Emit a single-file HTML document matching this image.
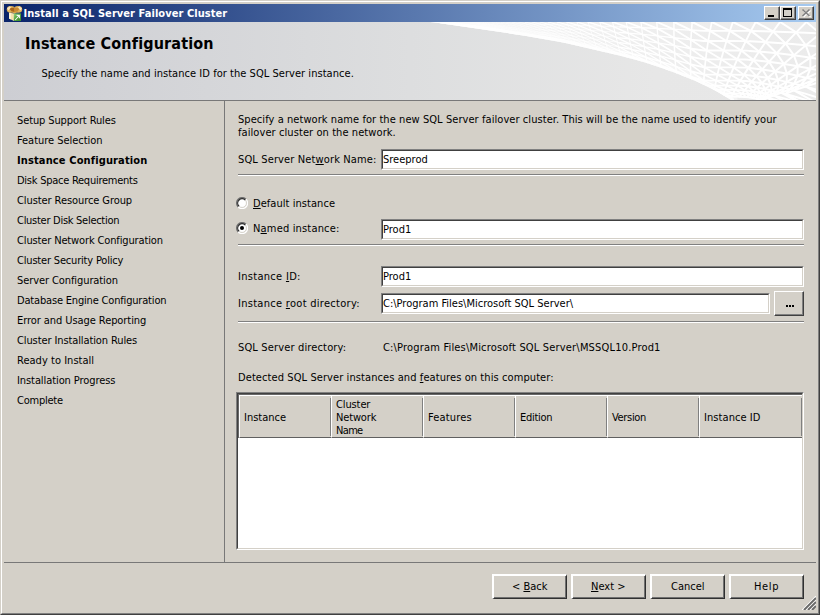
<!DOCTYPE html>
<html><head><meta charset="utf-8"><title>Install a SQL Server Failover Cluster</title>
<style>
html,body{margin:0;padding:0;}
body{width:820px;height:615px;overflow:hidden;background:#d4d0c8;position:relative;font-family:"DejaVu Sans Condensed","Liberation Sans",sans-serif;font-size:11px;color:#000;}
#c,#c div,#c i,#c span,#c svg{position:absolute;box-sizing:border-box;white-space:nowrap;}
#c{left:0;top:0;width:820px;height:615px;}
#win{left:0;top:0;width:820px;height:615px;border-top:1px solid #d4d0c8;border-left:1px solid #d4d0c8;border-right:1px solid #404040;border-bottom:1px solid #404040;}
#win2{left:1px;top:1px;width:818px;height:613px;border-top:1px solid #fff;border-left:1px solid #fff;border-right:1px solid #808080;border-bottom:1px solid #808080;}
#title{left:4px;top:4px;width:812px;height:18px;background:linear-gradient(to right,#0a246a 0%,#a6caf0 100%);}
.tb{top:6px;width:16px;height:14px;background:#d4d0c8;border-top:1px solid #fff;border-left:1px solid #fff;border-right:1px solid #404040;border-bottom:1px solid #404040;}
.tb i{left:0;top:0;width:14px;height:12px;border-right:1px solid #808080;border-bottom:1px solid #808080;}
#hdr{left:4px;top:22px;width:812px;height:78px;background:linear-gradient(to right,#cdced3 0%,#dddedf 50%,#e7e7e7 80%,#e8e8e8 100%);overflow:hidden;}
#hline{left:4px;top:100px;width:812px;height:1px;background:#787878;}
#vline{left:224px;top:101px;width:1px;height:461px;background:#787878;}
#bline{left:4px;top:562px;width:812px;height:1px;background:#787878;}
.t{line-height:13px;height:13px;font-size:11px;}
.b{font-weight:bold;}
.tt{font-weight:bold;color:#fff;}
.h1{font-weight:bold;font-size:16px;line-height:20px;height:20px;}
#c u{text-decoration:underline;}
.inp{background:#fff;height:21px;border-top:1px solid #808080;border-left:1px solid #808080;border-right:1px solid #fff;border-bottom:1px solid #fff;}
.inp i{left:0;top:0;right:0;bottom:0;border-top:1px solid #404040;border-left:1px solid #404040;border-right:1px solid #d4d0c8;border-bottom:1px solid #d4d0c8;}
.sep{left:238px;width:566px;height:2px;border-top:1px solid #808080;border-bottom:1px solid #fff;}
.btn{top:574px;width:75px;height:25px;background:#d4d0c8;border-top:2px solid #fff;border-left:2px solid #fff;border-right:1px solid #303030;border-bottom:1px solid #303030;}
.btn i{left:0;top:0;right:0;bottom:0;border-right:1px solid #707070;border-bottom:1px solid #707070;}
.btn2{left:774px;top:291px;width:30px;height:25px;background:#d4d0c8;border-top:1px solid #fff;border-left:1px solid #fff;border-right:1px solid #404040;border-bottom:1px solid #404040;}
.btn2 i{left:0;top:0;right:0;bottom:0;border-right:1px solid #808080;border-bottom:1px solid #808080;}
.dot{width:2px;height:2px;background:#000;top:305px;}
.radio{left:236px;width:12px;height:12px;}
#list{left:236px;top:392px;width:568px;height:158px;background:#fff;border-top:1px solid #808080;border-left:1px solid #808080;border-right:1px solid #fff;border-bottom:1px solid #fff;}
#list>i{left:0;top:0;right:0;bottom:0;border-top:1px solid #404040;border-left:1px solid #404040;border-right:1px solid #d4d0c8;border-bottom:1px solid #d4d0c8;}
#hd{left:238px;top:394px;width:564px;height:44px;background:#686868;}
.th{top:395px;height:43px;width:93px;background:#d4d0c8;border-top:1px solid #fff;border-left:1px solid #fff;border-bottom:1px solid #606060;}
.th i{right:0;top:2px;bottom:1px;width:1px;background:#808080;}
</style></head><body>
<div id="c">
 <div id="win"></div><div id="win2"></div>
 <div id="title">
<svg style="left:2px;top:1px" width="17" height="17" viewBox="0 0 17 17"><defs><linearGradient id="ig" x1="0" y1="0" x2="1" y2="1"><stop offset="0" stop-color="#9ad786"/><stop offset="0.5" stop-color="#4fa23c"/><stop offset="1" stop-color="#3c8a2c"/></linearGradient></defs><path d="M3,7.5 L8,8.5 L8,16 L3,13.5 Z" fill="#f3e2ae"/><path d="M3,7.5 L5,8 L5,14.5 L3,13.5 Z" fill="#fbf2d0"/><ellipse cx="4.9" cy="4.4" rx="4.1" ry="3.3" fill="#e0b35c"/><ellipse cx="12.1" cy="4.4" rx="4.1" ry="3.3" fill="#e0b35c"/><path d="M4,6 L8.5,4.2 L13,6 L8.5,8.8 Z" fill="#d9a548"/><path d="M3,3.2 L8.5,2.6 L8.5,7 L5.5,6.2 Z" fill="#a9651b"/><path d="M8.5,2.6 L14,3.2 L11.5,6.2 L8.5,7 Z" fill="#c98a32"/><path d="M1,3.5 L3.5,1.3 L5,2.5 L2.5,5.5 Z M16,3.5 L13.5,1.3 L12,2.5 L14.5,5.5 Z" fill="#f7e6bc"/><rect x="7.8" y="8.4" width="7.2" height="7.6" fill="url(#ig)"/><path d="M9.2,15 L12.8,11 M10.6,10.4 L13.4,10.4 L13.4,13.2" stroke="#fff" stroke-width="1.1" fill="none" stroke-opacity="0.95"/></svg>

 </div>
 <div class="tb" style="left:764px"><i></i><div style="left:3px;top:8px;width:6px;height:2px;background:#000"></div></div>
 <div class="tb" style="left:780px"><i></i><div style="left:2px;top:1px;width:9px;height:9px;border:1px solid #000;border-top-width:2px"></div></div>
 <div class="tb" style="left:798px"><i></i><svg style="left:2px;top:1px" width="11" height="10" viewBox="0 0 11 10"><path d="M2.5,2.5 L9.5,9 M9.5,2.5 L2.5,9" stroke="#fff" stroke-width="1.5" fill="none"/><path d="M1.5,1.5 L8.5,8 M8.5,1.5 L1.5,8" stroke="#808080" stroke-width="1.5" fill="none"/></svg></div>
 <div id="hdr">
<svg id="swoosh" width="812" height="78" viewBox="0 0 812 78" style="left:0;top:0"><defs><clipPath id="sw"><path d="M426.0,0.0 L426.0,0.0 L434.6,1.1 L443.2,2.3 L451.8,3.5 L460.4,4.7 L469.0,5.9 L477.6,7.2 L486.2,8.5 L494.8,9.8 L503.4,11.1 L512.0,12.5 L520.6,13.8 L529.2,15.2 L537.8,16.7 L546.4,18.2 L555.0,19.8 L563.6,21.5 L572.2,23.4 L580.8,25.4 L589.4,27.4 L598.0,29.5 L606.6,31.5 L615.2,33.5 L623.8,35.7 L632.4,38.0 L641.0,40.5 L649.6,43.3 L658.2,46.2 L666.8,49.3 L675.4,52.5 L684.0,55.9 L692.6,59.5 L701.2,63.4 L709.8,67.8 L718.4,72.7 L727.0,78.0 L812.0,78.0 L812.0,0.0 Z"/></clipPath><linearGradient id="swg" x1="0" y1="0" x2="1" y2="0"><stop offset="0" stop-color="#f8f8f8"/><stop offset="0.5" stop-color="#efefef"/><stop offset="1" stop-color="#ebebeb"/></linearGradient></defs>
<path d="M426.0,0.0 L426.0,0.0 L434.6,1.1 L443.2,2.3 L451.8,3.5 L460.4,4.7 L469.0,5.9 L477.6,7.2 L486.2,8.5 L494.8,9.8 L503.4,11.1 L512.0,12.5 L520.6,13.8 L529.2,15.2 L537.8,16.7 L546.4,18.2 L555.0,19.8 L563.6,21.5 L572.2,23.4 L580.8,25.4 L589.4,27.4 L598.0,29.5 L606.6,31.5 L615.2,33.5 L623.8,35.7 L632.4,38.0 L641.0,40.5 L649.6,43.3 L658.2,46.2 L666.8,49.3 L675.4,52.5 L684.0,55.9 L692.6,59.5 L701.2,63.4 L709.8,67.8 L718.4,72.7 L727.0,78.0 L812.0,78.0 L812.0,0.0 Z" fill="url(#swg)"/>
<g clip-path="url(#sw)" fill="none" stroke="#fff" stroke-linecap="round" stroke-linejoin="round">
<path stroke-width="0.35" d="M436.0,0.2 L450.0,0.5 L464.0,0.8 L478.0,1.0 L492.0,1.4 L506.0,1.7 L520.0,2.0 L534.0,2.3 L536.0,2.4"/>
<path stroke-width="0.68" d="M536.0,2.4 L550.0,2.7 L564.0,3.1 L578.0,3.6 L592.0,4.0 L606.0,4.5 L616.0,4.9"/>
<path stroke-width="1.30" d="M616.0,4.9 L630.0,5.4 L644.0,6.0 L658.0,6.7 L672.0,7.4 L686.0,8.2"/>
<path stroke-width="1.84" d="M686.0,8.2 L700.0,8.8 L714.0,8.8 L728.0,8.8 L742.0,8.9 L746.0,8.9"/>
<path stroke-width="2.00" d="M746.0,8.9 L760.0,9.2 L774.0,9.7 L788.0,10.2 L802.0,10.8 L816.0,11.5"/>
<path stroke-width="0.35" d="M436.0,0.4 L450.0,1.0 L464.0,1.6 L478.0,2.3 L492.0,2.9 L506.0,3.6 L520.0,4.3 L534.0,5.0 L536.0,5.1"/>
<path stroke-width="0.68" d="M536.0,5.1 L550.0,5.9 L564.0,6.7 L578.0,7.7 L592.0,8.7 L606.0,9.8 L616.0,10.5"/>
<path stroke-width="1.30" d="M616.0,10.5 L630.0,11.6 L644.0,12.9 L658.0,14.4 L672.0,16.0 L686.0,17.7"/>
<path stroke-width="1.84" d="M686.0,17.7 L700.0,19.0 L714.0,19.0 L728.0,19.0 L742.0,19.1 L746.0,19.3"/>
<path stroke-width="2.00" d="M746.0,19.3 L760.0,19.9 L774.0,20.9 L788.0,22.0 L802.0,23.3 L816.0,24.7"/>
<path stroke-width="0.35" d="M436.0,0.6 L450.0,1.5 L464.0,2.4 L478.0,3.4 L492.0,4.4 L506.0,5.4 L520.0,6.4 L534.0,7.5 L536.0,7.6"/>
<path stroke-width="0.68" d="M536.0,7.6 L550.0,8.8 L564.0,10.1 L578.0,11.6 L592.0,13.1 L606.0,14.6 L616.0,15.8"/>
<path stroke-width="1.30" d="M616.0,15.8 L630.0,17.4 L644.0,19.4 L658.0,21.6 L672.0,23.9 L686.0,26.5"/>
<path stroke-width="1.84" d="M686.0,26.5 L700.0,28.5 L714.0,28.5 L728.0,28.5 L742.0,28.7 L746.0,28.9"/>
<path stroke-width="2.00" d="M746.0,28.9 L760.0,29.9 L774.0,31.3 L788.0,33.0 L802.0,35.0 L816.0,37.1"/>
<path stroke-width="0.35" d="M436.0,0.8 L450.0,2.0 L464.0,3.2 L478.0,4.4 L492.0,5.7 L506.0,7.1 L520.0,8.4 L534.0,9.8 L536.0,10.0"/>
<path stroke-width="0.68" d="M536.0,10.0 L550.0,11.5 L564.0,13.2 L578.0,15.1 L592.0,17.2 L606.0,19.2 L616.0,20.6"/>
<path stroke-width="1.30" d="M616.0,20.6 L630.0,22.8 L644.0,25.3 L658.0,28.2 L672.0,31.3 L686.0,34.7"/>
<path stroke-width="1.84" d="M686.0,34.7 L700.0,37.3 L714.0,37.3 L728.0,37.3 L742.0,37.5 L746.0,37.8"/>
<path stroke-width="2.00" d="M746.0,37.8 L760.0,39.2 L774.0,41.0 L788.0,43.2 L802.0,45.8 L816.0,48.6"/>
<path stroke-width="0.35" d="M436.0,1.0 L450.0,2.4 L464.0,3.9 L478.0,5.4 L492.0,7.0 L506.0,8.6 L520.0,10.2 L534.0,11.9 L536.0,12.2"/>
<path stroke-width="0.68" d="M536.0,12.2 L550.0,14.0 L564.0,16.1 L578.0,18.4 L592.0,20.9 L606.0,23.3 L616.0,25.1"/>
<path stroke-width="1.30" d="M616.0,25.1 L630.0,27.8 L644.0,30.8 L658.0,34.3 L672.0,38.1 L686.0,42.2"/>
<path stroke-width="1.84" d="M686.0,42.2 L700.0,45.4 L714.0,45.4 L728.0,45.4 L742.0,45.7 L746.0,46.0"/>
<path stroke-width="2.00" d="M746.0,46.0 L760.0,47.7 L774.0,49.9 L788.0,52.6 L802.0,55.7 L816.0,59.1"/>
<path stroke-width="0.35" d="M436.0,1.1 L450.0,2.8 L464.0,4.5 L478.0,6.3 L492.0,8.1 L506.0,10.0 L520.0,11.9 L534.0,13.9 L536.0,14.1"/>
<path stroke-width="0.68" d="M536.0,14.1 L550.0,16.3 L564.0,18.7 L578.0,21.4 L592.0,24.2 L606.0,27.1 L616.0,29.1"/>
<path stroke-width="1.30" d="M616.0,29.1 L630.0,32.2 L644.0,35.8 L658.0,39.9 L672.0,44.3 L686.0,49.0"/>
<path stroke-width="1.84" d="M686.0,49.0 L700.0,52.7 L714.0,52.7 L728.0,52.7 L742.0,53.0 L746.0,53.4"/>
<path stroke-width="2.00" d="M746.0,53.4 L760.0,55.3 L774.0,57.9 L788.0,61.1 L802.0,64.6 L816.0,68.6"/>
<path stroke-width="0.35" d="M436.0,1.3 L450.0,3.1 L464.0,5.0 L478.0,7.0 L492.0,9.0 L506.0,11.1 L520.0,13.2 L534.0,15.4 L536.0,15.7"/>
<path stroke-width="0.68" d="M536.0,15.7 L550.0,18.1 L564.0,20.8 L578.0,23.8 L592.0,26.9 L606.0,30.1 L616.0,32.4"/>
<path stroke-width="1.30" d="M616.0,32.4 L630.0,35.9 L644.0,39.8 L658.0,44.3 L672.0,49.2 L686.0,54.5"/>
<path stroke-width="1.84" d="M686.0,54.5 L700.0,58.6 L714.0,58.6 L728.0,58.6 L742.0,59.0 L746.0,59.4"/>
<path stroke-width="2.00" d="M746.0,59.4 L760.0,61.5 L774.0,64.4 L788.0,67.9 L802.0,71.9 L816.0,76.3"/>
<path stroke-width="0.35" d="M436.0,1.4 L450.0,3.4 L464.0,5.4 L478.0,7.6 L492.0,9.8 L506.0,12.0 L520.0,14.3 L534.0,16.7 L536.0,17.1"/>
<path stroke-width="0.68" d="M536.0,17.1 L550.0,19.7 L564.0,22.5 L578.0,25.8 L592.0,29.2 L606.0,32.7 L616.0,35.2"/>
<path stroke-width="1.30" d="M616.0,35.2 L630.0,38.9 L644.0,43.2 L658.0,48.1 L672.0,53.4 L686.0,59.1"/>
<path stroke-width="1.84" d="M686.0,59.1 L700.0,63.6 L714.0,63.6 L728.0,63.6 L742.0,64.0 L746.0,64.4"/>
<path stroke-width="2.00" d="M746.0,64.4 L760.0,66.8 L774.0,69.9 L788.0,73.7 L802.0,78.0 L816.0,82.8"/>
<path stroke-width="0.35" d="M436.0,1.5 L450.0,3.6 L464.0,5.8 L478.0,8.1 L492.0,10.4 L506.0,12.8 L520.0,15.3 L534.0,17.8 L536.0,18.2"/>
<path stroke-width="0.68" d="M536.0,18.2 L550.0,21.0 L564.0,24.1 L578.0,27.5 L592.0,31.2 L606.0,34.9 L616.0,37.5"/>
<path stroke-width="1.30" d="M616.0,37.5 L630.0,41.5 L644.0,46.1 L658.0,51.3 L672.0,57.0 L686.0,63.1"/>
<path stroke-width="1.84" d="M686.0,63.1 L700.0,67.8 L714.0,67.8 L728.0,67.8 L742.0,68.3 L746.0,68.8"/>
<path stroke-width="2.00" d="M746.0,68.8 L760.0,71.2 L774.0,74.6 L788.0,78.6 L802.0,83.2"/>
<path stroke-width="0.35" d="M436.0,1.5 L450.0,3.8 L464.0,6.1 L478.0,8.5 L492.0,11.0 L506.0,13.5 L520.0,16.1 L534.0,18.8 L536.0,19.2"/>
<path stroke-width="0.68" d="M536.0,19.2 L550.0,22.1 L564.0,25.3 L578.0,29.0 L592.0,32.9 L606.0,36.7 L616.0,39.5"/>
<path stroke-width="1.30" d="M616.0,39.5 L630.0,43.7 L644.0,48.5 L658.0,54.1 L672.0,60.0 L686.0,66.4"/>
<path stroke-width="1.84" d="M686.0,66.4 L700.0,71.5 L714.0,71.5 L728.0,71.5 L742.0,71.9 L746.0,72.4"/>
<path stroke-width="2.00" d="M746.0,72.4 L760.0,75.0 L774.0,78.5 L788.0,82.8"/>
<path stroke-width="0.35" d="M436.0,1.6 L450.0,4.0 L464.0,6.4 L478.0,8.9 L492.0,11.5 L506.0,14.1 L520.0,16.8 L534.0,19.6 L536.0,20.0"/>
<path stroke-width="0.68" d="M536.0,20.0 L550.0,23.0 L564.0,26.4 L578.0,30.2 L592.0,34.3 L606.0,38.3 L616.0,41.2"/>
<path stroke-width="1.30" d="M616.0,41.2 L630.0,45.6 L644.0,50.6 L658.0,56.4 L672.0,62.6 L686.0,69.3"/>
<path stroke-width="1.84" d="M686.0,69.3 L700.0,74.5 L714.0,74.5 L728.0,74.5 L742.0,75.0 L746.0,75.5"/>
<path stroke-width="2.00" d="M746.0,75.5 L760.0,78.2 L774.0,81.9"/>
<path stroke-width="6" stroke-opacity="0.85" d="M426.0,0.0 L434.6,1.1 L443.2,2.3 L451.8,3.5 L460.4,4.7 L469.0,5.9 L477.6,7.2 L486.2,8.5 L494.8,9.8 L503.4,11.1 L512.0,12.5 L520.6,13.8 L529.2,15.2 L537.8,16.7 L546.4,18.2 L555.0,19.8 L563.6,21.5 L572.2,23.4 L580.8,25.4 L589.4,27.4 L598.0,29.5 L606.6,31.5 L615.2,33.5 L623.8,35.7 L632.4,38.0 L641.0,40.5 L649.6,43.3 L658.2,46.2 L666.8,49.3 L675.4,52.5 L684.0,55.9 L692.6,59.5 L701.2,63.4 L709.8,67.8 L718.4,72.7 L727.0,78.0"/>
<path stroke-width="13" stroke-opacity="0.4" d="M426.0,0.0 L434.6,1.1 L443.2,2.3 L451.8,3.5 L460.4,4.7 L469.0,5.9 L477.6,7.2 L486.2,8.5 L494.8,9.8 L503.4,11.1 L512.0,12.5 L520.6,13.8 L529.2,15.2 L537.8,16.7 L546.4,18.2 L555.0,19.8 L563.6,21.5 L572.2,23.4 L580.8,25.4 L589.4,27.4 L598.0,29.5 L606.6,31.5 L615.2,33.5 L623.8,35.7 L632.4,38.0 L641.0,40.5 L649.6,43.3 L658.2,46.2 L666.8,49.3 L675.4,52.5 L684.0,55.9 L692.6,59.5 L701.2,63.4 L709.8,67.8 L718.4,72.7 L727.0,78.0"/>
<path stroke-width="2.00" d="M1006.8,0.0 L942.5,19.8 L894.2,35.0 L861.3,45.4 L836.7,53.2 L817.3,59.5 L801.7,64.5 L789.9,68.4 L781.6,71.9 L1006.8,195.6"/>
<path stroke-width="2.00" d="M966.3,0.0 L917.2,17.9 L877.6,32.5 L849.4,43.1 L827.9,51.2 L810.6,57.8 L796.5,63.2 L785.8,67.3 L777.0,70.7 L769.8,73.5 L763.7,75.9 L758.4,77.9"/>
<path stroke-width="2.00" d="M928.6,0.0 L891.6,16.0 L859.8,30.1 L836.3,40.6 L817.8,49.0 L802.7,55.9 L790.2,61.6 L780.7,66.0 L772.9,69.6 L766.4,72.7 L760.9,75.2 L756.3,77.4"/>
<path stroke-width="2.00" d="M893.5,0.0 L866.1,14.3 L841.1,27.7 L821.9,38.1 L806.4,46.6 L793.5,53.8 L782.7,59.8 L774.4,64.5 L767.6,68.4 L761.9,71.6 L757.1,74.4 L753.0,76.7"/>
<path stroke-width="2.00" d="M860.9,0.0 L840.9,12.8 L821.7,25.4 L806.3,35.6 L793.7,44.2 L782.9,51.6 L773.9,57.9 L766.8,62.8 L761.0,67.0 L756.1,70.4 L752.0,73.4 L748.5,75.9"/>
<path stroke-width="2.00" d="M830.6,0.0 L816.2,11.5 L801.8,23.3 L789.9,33.3 L779.8,41.9 L771.1,49.4 L763.7,56.0 L758.0,61.1 L753.2,65.5 L749.1,69.2 L745.7,72.4 L742.8,75.1"/>
<path stroke-width="2.00" d="M802.4,0.0 L792.2,10.4 L781.6,21.5 L772.7,31.2 L765.0,39.8 L758.2,47.4 L752.4,54.2 L747.8,59.6 L744.0,64.2 L740.8,68.2 L738.0,71.6 L735.7,74.5"/>
<path stroke-width="2.00" d="M776.1,0.0 L769.1,9.5 L761.6,20.0 L755.1,29.5 L749.4,38.1 L744.4,45.9 L740.0,52.9 L736.5,58.6 L733.6,63.6 L731.1,67.8 L729.1,71.5 L727.4,74.5"/>
<path stroke-width="1.96" d="M751.7,0.0 L746.9,8.9 L741.8,19.1 L737.3,28.5 L733.3,37.3 L729.7,45.4 L726.7,52.7 L724.4,58.6 L722.5,63.6 L720.9,67.8 L719.6,71.5 L718.5,74.5"/>
<path stroke-width="1.84" d="M728.9,0.0 L725.9,8.8 L722.5,19.0 L719.7,28.5 L717.2,37.3 L715.2,45.4 L713.4,52.7 L712.2,58.6 L711.1,63.6 L710.3,67.8 L709.7,71.5 L709.2,74.5"/>
<path stroke-width="1.72" d="M707.8,0.0 L706.0,8.8 L704.2,19.0 L702.8,28.5 L701.7,37.3 L700.8,45.4 L700.2,52.7 L699.8,58.6 L699.5,63.6 L699.4,67.8 L699.3,71.5 L699.2,74.5"/>
<path stroke-width="1.60" d="M688.2,0.0 L687.5,8.3 L686.9,17.8 L686.6,26.6 L686.4,34.8 L686.5,42.3 L686.6,49.2 L686.8,54.8 L687.1,59.6 L687.3,63.7 L687.6,67.2 L687.8,70.2"/>
<path stroke-width="1.47" d="M669.9,0.0 L669.9,7.3 L670.0,15.7 L670.3,23.6 L670.7,31.0 L671.1,37.9 L671.7,44.2 L672.2,49.3 L672.6,53.7 L673.1,57.5 L673.5,60.7 L673.9,63.5"/>
<path stroke-width="1.34" d="M652.8,0.0 L653.2,6.4 L653.8,13.9 L654.4,21.0 L655.0,27.6 L655.7,33.7 L656.4,39.4 L657.1,44.0 L657.6,48.0 L658.2,51.4 L658.6,54.3 L659.1,56.8"/>
<path stroke-width="1.22" d="M637.0,0.0 L637.7,5.7 L638.5,12.4 L639.4,18.7 L640.3,24.6 L641.2,30.2 L642.1,35.3 L642.9,39.5 L643.5,43.0 L644.1,46.1 L644.7,48.8 L645.1,51.1"/>
<path stroke-width="1.11" d="M622.3,0.0 L623.2,5.1 L624.3,11.2 L625.4,16.9 L626.4,22.2 L627.5,27.3 L628.5,31.9 L629.4,35.7 L630.1,38.9 L630.8,41.7 L631.3,44.1 L631.8,46.2"/>
<path stroke-width="1.00" d="M608.6,0.0 L609.6,4.6 L610.9,10.1 L612.2,15.3 L613.4,20.2 L614.5,24.8 L615.6,29.1 L616.6,32.5 L617.4,35.5 L618.1,38.1 L618.7,40.3 L619.2,42.2"/>
<path stroke-width="0.90" d="M595.9,0.0 L597.0,4.2 L598.4,9.2 L599.8,14.0 L601.1,18.5 L602.3,22.7 L603.5,26.6 L604.5,29.8 L605.3,32.5 L606.1,34.9 L606.7,36.9 L607.3,38.7"/>
<path stroke-width="0.80" d="M584.0,0.0 L585.2,3.8 L586.7,8.3 L588.1,12.7 L589.5,16.8 L590.8,20.7 L592.0,24.2 L593.0,27.2 L593.9,29.7 L594.7,31.9 L595.3,33.8 L595.9,35.4"/>
<path stroke-width="0.71" d="M573.0,0.0 L574.2,3.4 L575.7,7.5 L577.2,11.5 L578.5,15.2 L579.9,18.7 L581.1,22.0 L582.1,24.7 L583.0,27.0 L583.8,29.0 L584.5,30.8 L585.1,32.3"/>
<path stroke-width="0.63" d="M562.7,0.0 L564.0,3.1 L565.5,6.8 L566.9,10.4 L568.3,13.8 L569.6,17.0 L570.8,20.0 L571.9,22.4 L572.7,24.5 L573.5,26.4 L574.2,28.0 L574.8,29.3"/>
<path stroke-width="0.55" d="M553.2,0.0 L554.4,2.8 L555.9,6.2 L557.3,9.5 L558.7,12.6 L560.0,15.5 L561.2,18.2 L562.2,20.4 L563.1,22.3 L563.8,24.0 L564.5,25.5 L565.0,26.7"/>
<path stroke-width="0.47" d="M544.3,0.0 L545.5,2.6 L547.0,5.7 L548.4,8.7 L549.7,11.5 L551.0,14.2 L552.2,16.7 L553.2,18.7 L554.0,20.5 L554.8,22.0 L555.4,23.3 L555.9,24.4"/>
<path stroke-width="0.40" d="M536.1,0.0 L537.3,2.4 L538.7,5.2 L540.1,8.0 L541.4,10.6 L542.6,13.0 L543.8,15.3 L544.7,17.2 L545.6,18.8 L546.3,20.2 L546.9,21.4 L547.4,22.5"/>
<path stroke-width="0.35" d="M528.4,0.0 L529.6,2.2 L531.0,4.8 L532.3,7.4 L533.6,9.8 L534.8,12.0 L535.9,14.1 L536.8,15.9 L537.6,17.4 L538.3,18.7 L538.9,19.8 L539.5,20.7"/>
<path stroke-width="0.35" d="M521.2,0.0 L522.4,2.0 L523.7,4.5 L525.0,6.8 L526.3,9.0 L527.5,11.1 L528.5,13.1 L529.4,14.7 L530.2,16.1 L530.9,17.3 L531.5,18.3 L532.0,19.2"/>
<path stroke-width="0.35" d="M514.6,0.0 L515.7,1.9 L517.0,4.1 L518.3,6.3 L519.5,8.3 L520.6,10.3 L521.7,12.1 L522.5,13.6 L523.3,14.9 L523.9,16.0 L524.5,16.9 L525.0,17.8"/>
<path stroke-width="0.35" d="M508.4,0.0 L509.5,1.7 L510.7,3.8 L512.0,5.8 L513.1,7.7 L514.2,9.5 L515.2,11.2 L516.1,12.6 L516.8,13.8 L517.4,14.8 L518.0,15.7 L518.4,16.5"/>
<path stroke-width="0.35" d="M502.7,0.0 L503.7,1.6 L504.9,3.5 L506.1,5.4 L507.2,7.2 L508.2,8.8 L509.2,10.4 L510.0,11.7 L510.7,12.8 L511.3,13.8 L511.8,14.6 L512.3,15.3"/>
<path stroke-width="0.35" d="M497.3,0.0 L498.3,1.5 L499.4,3.3 L500.6,5.0 L501.6,6.6 L502.6,8.2 L503.6,9.6 L504.4,10.8 L505.0,11.9 L505.6,12.8 L506.1,13.5 L506.5,14.2"/>
<path stroke-width="0.35" d="M492.3,0.0 L493.3,1.4 L494.4,3.0 L495.4,4.6 L496.5,6.2 L497.4,7.6 L498.3,8.9 L499.1,10.1 L499.7,11.0 L500.3,11.9 L500.7,12.6 L501.2,13.2"/>
<path stroke-width="0.35" d="M487.7,0.0 L488.6,1.3 L489.6,2.8 L490.7,4.3 L491.6,5.7 L492.5,7.0 L493.4,8.3 L494.1,9.3 L494.7,10.2 L495.3,11.0 L495.7,11.7 L496.1,12.2"/>
<path stroke-width="0.35" d="M483.4,0.0 L484.2,1.2 L485.2,2.6 L486.2,4.0 L487.1,5.3 L488.0,6.5 L488.8,7.7 L489.5,8.6 L490.1,9.5 L490.6,10.2 L491.0,10.8 L491.4,11.4"/>
<path stroke-width="0.35" d="M479.4,0.0 L480.2,1.1 L481.1,2.4 L482.0,3.7 L482.9,4.9 L483.7,6.1 L484.5,7.1 L485.2,8.0 L485.7,8.8 L486.2,9.5 L486.6,10.0 L487.0,10.5"/>
<path stroke-width="0.35" d="M475.7,0.0 L476.4,1.0 L477.3,2.2 L478.2,3.4 L479.0,4.5 L479.8,5.6 L480.5,6.6 L481.1,7.4 L481.6,8.1 L482.1,8.8 L482.5,9.3 L482.8,9.8"/>
<path stroke-width="0.35" d="M472.2,0.0 L472.9,0.9 L473.8,2.1 L474.6,3.2 L475.3,4.2 L476.1,5.2 L476.8,6.1 L477.3,6.9 L477.8,7.6 L478.3,8.1 L478.6,8.6 L479.0,9.1"/>
<path stroke-width="2.00" d="M830.6,0.0 L840.9,12.8 L841.1,27.7 L836.3,40.6 L827.9,51.2 L817.3,59.5 L1050.4,176.8"/>
<path stroke-width="2.00" d="M802.4,0.0 L816.2,11.5 L821.7,25.4 L821.9,38.1 L817.8,49.0 L810.6,57.8 L801.7,64.5 L1050.4,196.6"/>
<path stroke-width="2.00" d="M776.1,0.0 L792.2,10.4 L801.8,23.3 L806.3,35.6 L806.4,46.6 L802.7,55.9 L796.5,63.2 L789.9,68.4 L1050.4,213.4"/>
<path stroke-width="2.00" d="M751.7,0.0 L769.1,9.5 L781.6,21.5 L789.9,33.3 L793.7,44.2 L793.5,53.8 L790.2,61.6 L785.8,67.3 L781.6,71.9 L1050.4,227.7"/>
<path stroke-width="2.00" d="M728.9,0.0 L746.9,8.9 L761.6,20.0 L772.7,31.2 L779.8,41.9 L782.9,51.6 L782.7,59.8 L780.7,66.0 L777.0,70.7 L1006.8,195.6"/>
<path stroke-width="2.00" d="M707.8,0.0 L725.9,8.8 L741.8,19.1 L755.1,29.5 L765.0,39.8 L771.1,49.4 L773.9,57.9 L774.4,64.5 L772.9,69.6 L769.8,73.5 L1006.8,206.1"/>
<path stroke-width="2.00" d="M688.2,0.0 L706.0,8.8 L722.5,19.0 L737.3,28.5 L749.4,38.1 L758.2,47.4 L763.7,56.0 L766.8,62.8 L767.6,68.4 L766.4,72.7 L763.7,75.9 L1006.8,214.9"/>
<path stroke-width="1.99" d="M669.9,0.0 L687.5,8.3 L704.2,19.0 L719.7,28.5 L733.3,37.3 L744.4,45.9 L752.4,54.2 L758.0,61.1 L761.0,67.0 L761.9,71.6 L760.9,75.2 L758.4,77.9"/>
<path stroke-width="1.89" d="M652.8,0.0 L669.9,7.3 L686.9,17.8 L702.8,28.5 L717.2,37.3 L729.7,45.4 L740.0,52.9 L747.8,59.6 L753.2,65.5 L756.1,70.4 L757.1,74.4 L756.3,77.4"/>
<path stroke-width="1.79" d="M637.0,0.0 L653.2,6.4 L670.0,15.7 L686.6,26.6 L701.7,37.3 L715.2,45.4 L726.7,52.7 L736.5,58.6 L744.0,64.2 L749.1,69.2 L752.0,73.4 L753.0,76.7"/>
<path stroke-width="1.69" d="M622.3,0.0 L637.7,5.7 L653.8,13.9 L670.3,23.6 L686.4,34.8 L700.8,45.4 L713.4,52.7 L724.4,58.6 L733.6,63.6 L740.8,68.2 L745.7,72.4 L748.5,75.9"/>
<path stroke-width="1.59" d="M608.6,0.0 L623.2,5.1 L638.5,12.4 L654.4,21.0 L670.7,31.0 L686.5,42.3 L700.2,52.7 L712.2,58.6 L722.5,63.6 L731.1,67.8 L738.0,71.6 L742.8,75.1"/>
<path stroke-width="1.48" d="M595.9,0.0 L609.6,4.6 L624.3,11.2 L639.4,18.7 L655.0,27.6 L671.1,37.9 L686.6,49.2 L699.8,58.6 L711.1,63.6 L720.9,67.8 L729.1,71.5 L735.7,74.5"/>
<path stroke-width="1.38" d="M584.0,0.0 L597.0,4.2 L610.9,10.1 L625.4,16.9 L640.3,24.6 L655.7,33.7 L671.7,44.2 L686.8,54.8 L699.5,63.6 L710.3,67.8 L719.6,71.5 L727.4,74.5"/>
<path stroke-width="1.28" d="M573.0,0.0 L585.2,3.8 L598.4,9.2 L612.2,15.3 L626.4,22.2 L641.2,30.2 L656.4,39.4 L672.2,49.3 L687.1,59.6 L699.4,67.8 L709.7,71.5 L718.5,74.5"/>
<path stroke-width="1.18" d="M562.7,0.0 L574.2,3.4 L586.7,8.3 L599.8,14.0 L613.4,20.2 L627.5,27.3 L642.1,35.3 L657.1,44.0 L672.6,53.7 L687.3,63.7 L699.3,71.5 L709.2,74.5"/>
<path stroke-width="1.08" d="M553.2,0.0 L564.0,3.1 L575.7,7.5 L588.1,12.7 L601.1,18.5 L614.5,24.8 L628.5,31.9 L642.9,39.5 L657.6,48.0 L673.1,57.5 L687.6,67.2 L699.2,74.5"/>
<path stroke-width="0.98" d="M544.3,0.0 L554.4,2.8 L565.5,6.8 L577.2,11.5 L589.5,16.8 L602.3,22.7 L615.6,29.1 L629.4,35.7 L643.5,43.0 L658.2,51.4 L673.5,60.7 L687.8,70.2"/>
<path stroke-width="0.88" d="M536.1,0.0 L545.5,2.6 L555.9,6.2 L566.9,10.4 L578.5,15.2 L590.8,20.7 L603.5,26.6 L616.6,32.5 L630.1,38.9 L644.1,46.1 L658.6,54.3 L673.9,63.5"/>
<path stroke-width="0.79" d="M528.4,0.0 L537.3,2.4 L547.0,5.7 L557.3,9.5 L568.3,13.8 L579.9,18.7 L592.0,24.2 L604.5,29.8 L617.4,35.5 L630.8,41.7 L644.7,48.8 L659.1,56.8"/>
<path stroke-width="0.70" d="M521.2,0.0 L529.6,2.2 L538.7,5.2 L548.4,8.7 L558.7,12.6 L569.6,17.0 L581.1,22.0 L593.0,27.2 L605.3,32.5 L618.1,38.1 L631.3,44.1 L645.1,51.1"/>
<path stroke-width="0.62" d="M514.6,0.0 L522.4,2.0 L531.0,4.8 L540.1,8.0 L549.7,11.5 L560.0,15.5 L570.8,20.0 L582.1,24.7 L593.9,29.7 L606.1,34.9 L618.7,40.3 L631.8,46.2"/>
<path stroke-width="0.54" d="M508.4,0.0 L515.7,1.9 L523.7,4.5 L532.3,7.4 L541.4,10.6 L551.0,14.2 L561.2,18.2 L571.9,22.4 L583.0,27.0 L594.7,31.9 L606.7,36.9 L619.2,42.2"/>
<path stroke-width="0.47" d="M502.7,0.0 L509.5,1.7 L517.0,4.1 L525.0,6.8 L533.6,9.8 L542.6,13.0 L552.2,16.7 L562.2,20.4 L572.7,24.5 L583.8,29.0 L595.3,33.8 L607.3,38.7"/>
<path stroke-width="0.40" d="M497.3,0.0 L503.7,1.6 L510.7,3.8 L518.3,6.3 L526.3,9.0 L534.8,12.0 L543.8,15.3 L553.2,18.7 L563.1,22.3 L573.5,26.4 L584.5,30.8 L595.9,35.4"/>
<path stroke-width="0.35" d="M492.3,0.0 L498.3,1.5 L504.9,3.5 L512.0,5.8 L519.5,8.3 L527.5,11.1 L535.9,14.1 L544.7,17.2 L554.0,20.5 L563.8,24.0 L574.2,28.0 L585.1,32.3"/>
<path stroke-width="0.35" d="M487.7,0.0 L493.3,1.4 L499.4,3.3 L506.1,5.4 L513.1,7.7 L520.6,10.3 L528.5,13.1 L536.8,15.9 L545.6,18.8 L554.8,22.0 L564.5,25.5 L574.8,29.3"/>
<path stroke-width="0.35" d="M483.4,0.0 L488.6,1.3 L494.4,3.0 L500.6,5.0 L507.2,7.2 L514.2,9.5 L521.7,12.1 L529.4,14.7 L537.6,17.4 L546.3,20.2 L555.4,23.3 L565.0,26.7"/>
<path stroke-width="0.35" d="M479.4,0.0 L484.2,1.2 L489.6,2.8 L495.4,4.6 L501.6,6.6 L508.2,8.8 L515.2,11.2 L522.5,13.6 L530.2,16.1 L538.3,18.7 L546.9,21.4 L555.9,24.4"/>
<path stroke-width="0.35" d="M475.7,0.0 L480.2,1.1 L485.2,2.6 L490.7,4.3 L496.5,6.2 L502.6,8.2 L509.2,10.4 L516.1,12.6 L523.3,14.9 L530.9,17.3 L538.9,19.8 L547.4,22.5"/>
<path stroke-width="0.35" d="M472.2,0.0 L476.4,1.0 L481.1,2.4 L486.2,4.0 L491.6,5.7 L497.4,7.6 L503.6,9.6 L510.0,11.7 L516.8,13.8 L523.9,16.0 L531.5,18.3 L539.5,20.7"/>
<path stroke-width="0.35" d="M472.9,0.9 L477.3,2.2 L482.0,3.7 L487.1,5.3 L492.5,7.0 L498.3,8.9 L504.4,10.8 L510.7,12.8 L517.4,14.8 L524.5,16.9 L532.0,19.2"/>
<path stroke-width="0.35" d="M473.8,2.1 L478.2,3.4 L482.9,4.9 L488.0,6.5 L493.4,8.3 L499.1,10.1 L505.0,11.9 L511.3,13.8 L518.0,15.7 L525.0,17.8"/>
<path stroke-width="0.35" d="M474.6,3.2 L479.0,4.5 L483.7,6.1 L488.8,7.7 L494.1,9.3 L499.7,11.0 L505.6,12.8 L511.8,14.6 L518.4,16.5"/>
<path stroke-width="0.35" d="M475.3,4.2 L479.8,5.6 L484.5,7.1 L489.5,8.6 L494.7,10.2 L500.3,11.9 L506.1,13.5 L512.3,15.3"/>
<path stroke-width="0.35" d="M476.1,5.2 L480.5,6.6 L485.2,8.0 L490.1,9.5 L495.3,11.0 L500.7,12.6 L506.5,14.2"/>
<path stroke-width="0.35" d="M476.8,6.1 L481.1,7.4 L485.7,8.8 L490.6,10.2 L495.7,11.7 L501.2,13.2"/>
<path stroke-width="0.35" d="M477.3,6.9 L481.6,8.1 L486.2,9.5 L491.0,10.8 L496.1,12.2"/>
<path stroke-width="0.35" d="M477.8,7.6 L482.1,8.8 L486.6,10.0 L491.4,11.4"/>
<path stroke-width="0.35" d="M478.3,8.1 L482.5,9.3 L487.0,10.5"/>
<path stroke-width="0.35" d="M478.6,8.6 L482.8,9.8"/>
</g></svg>
 </div>
 <div id="hline"></div>
 <div id="vline"></div>
 <div id="bline"></div>

 <div class="inp" style="left:381px;top:149px;width:423px"><i></i></div>
 <div class="sep" style="top:174px"></div>
 <svg class="radio" style="top:197px" width="12" height="12" viewBox="0 0 12 12"><circle cx="6" cy="6" r="5" fill="#fff"/><path d="M10,2.2 A5.4,5.4 0 1 0 2.2,10" fill="none" stroke="#707070" stroke-width="1.3"/><path d="M9.2,3 A4.3,4.3 0 1 0 3,9.2" fill="none" stroke="#303030" stroke-width="1.3"/><path d="M2.2,10 A5.4,5.4 0 0 0 10,2.2" fill="none" stroke="#fff" stroke-width="1.2"/><path d="M3,9.2 A4.3,4.3 0 0 0 9.2,3" fill="none" stroke="#d4d0c8" stroke-width="1"/></svg>
 <svg class="radio" style="top:222px" width="12" height="12" viewBox="0 0 12 12"><circle cx="6" cy="6" r="5" fill="#fff"/><path d="M10,2.2 A5.4,5.4 0 1 0 2.2,10" fill="none" stroke="#707070" stroke-width="1.3"/><path d="M9.2,3 A4.3,4.3 0 1 0 3,9.2" fill="none" stroke="#303030" stroke-width="1.3"/><path d="M2.2,10 A5.4,5.4 0 0 0 10,2.2" fill="none" stroke="#fff" stroke-width="1.2"/><path d="M3,9.2 A4.3,4.3 0 0 0 9.2,3" fill="none" stroke="#d4d0c8" stroke-width="1"/><circle cx="6" cy="6" r="2" fill="#000"/></svg>
 <div class="inp" style="left:381px;top:219px;width:423px"><i></i></div>
 <div class="sep" style="top:244px"></div>
 <div class="inp" style="left:381px;top:266px;width:423px"><i></i></div>
 <div class="inp" style="left:381px;top:293px;width:389px"><i></i></div>
 <div class="btn2"><i></i></div>
 <div class="dot" style="left:786px"></div><div class="dot" style="left:789px"></div><div class="dot" style="left:792px"></div>
 <div class="sep" style="top:321px"></div>

 <div id="list"><i></i></div><div id="hd"></div>
 <div class="th" style="left:239px;width:92px"><i></i></div>
 <div class="th" style="left:331px;width:92px"><i></i></div>
 <div class="th" style="left:423px;width:92px"><i></i></div>
 <div class="th" style="left:515px;width:92px"><i></i></div>
 <div class="th" style="left:607px;width:92px"><i></i></div>
 <div class="th" style="left:699px;width:103px"><i></i></div>

 <div class="btn" style="left:492px"><i></i></div>
 <div class="btn" style="left:571px"><i></i></div>
 <div class="btn" style="left:650px"><i></i></div>
 <div class="btn" style="left:729px"><i></i></div>
<svg style="left:802px;top:596px" width="14" height="14" viewBox="0 0 14 14"><g fill="none"><path d="M0.3,14 L14,0.3 M4.3,14 L14,4.3 M8.3,14 L14,8.3" stroke="#fff" stroke-width="1.2"/><path d="M2,14 L14,2 M6,14 L14,6 M10,14 L14,10" stroke="#6a6a6a" stroke-width="1.9"/></g></svg>
<div id="ttl" class="t tt" style="left:23.5px;top:7px;letter-spacing:0.056px;">Install a SQL Server Failover Cluster</div>
<div id="h1" class="t h1" style="left:25px;top:34px;letter-spacing:0.143px;">Instance Configuration</div>
<div id="h2" class="t " style="left:41.5px;top:67px;letter-spacing:0.042px;">Specify the name and instance ID for the SQL Server instance.</div>
<div id="n0" class="t " style="left:17px;top:114px;letter-spacing:-0.111px;">Setup Support Rules</div>
<div id="n1" class="t " style="left:17px;top:134px;letter-spacing:-0.031px;">Feature Selection</div>
<div id="n2" class="t b" style="left:17px;top:154px;letter-spacing:0.129px;">Instance Configuration</div>
<div id="n3" class="t " style="left:17px;top:174px;letter-spacing:-0.255px;">Disk Space Requirements</div>
<div id="n4" class="t " style="left:17px;top:194px;letter-spacing:-0.081px;">Cluster Resource Group</div>
<div id="n5" class="t " style="left:17px;top:214px;letter-spacing:-0.276px;">Cluster Disk Selection</div>
<div id="n6" class="t " style="left:17px;top:234px;letter-spacing:-0.139px;">Cluster Network Configuration</div>
<div id="n7" class="t " style="left:17px;top:254px;letter-spacing:-0.186px;">Cluster Security Policy</div>
<div id="n8" class="t " style="left:17px;top:274px;letter-spacing:-0.089px;">Server Configuration</div>
<div id="n9" class="t " style="left:17px;top:294px;letter-spacing:-0.179px;">Database Engine Configuration</div>
<div id="n10" class="t " style="left:17px;top:314px;letter-spacing:-0.071px;">Error and Usage Reporting</div>
<div id="n11" class="t " style="left:17px;top:334px;letter-spacing:-0.108px;">Cluster Installation Rules</div>
<div id="n12" class="t " style="left:17px;top:354px;letter-spacing:0.027px;">Ready to Install</div>
<div id="n13" class="t " style="left:17px;top:374px;letter-spacing:-0.085px;">Installation Progress</div>
<div id="n14" class="t " style="left:17px;top:394px;letter-spacing:-0.243px;">Complete</div>
<div id="p1" class="t " style="left:238px;top:113px;letter-spacing:0.066px;">Specify a network name for the new SQL Server failover cluster. This will be the name used to identify your</div>
<div id="p2" class="t " style="left:238px;top:126px;letter-spacing:0.081px;">failover cluster on the network.</div>
<div id="l1" class="t " style="left:238px;top:153px;letter-spacing:0.130px;">SQL Server Net<u>w</u>ork Name:</div>
<div id="e1" class="t " style="left:383px;top:153px;">Sreeprod</div>
<div id="r1" class="t " style="left:253px;top:197px;letter-spacing:0.053px;"><u>D</u>efault instance</div>
<div id="r2" class="t " style="left:253px;top:222px;letter-spacing:0.171px;">N<u>a</u>med instance:</div>
<div id="e2" class="t " style="left:383px;top:223px;">Prod1</div>
<div id="l3" class="t " style="left:238px;top:270px;letter-spacing:0.300px;">Instance <u>I</u>D:</div>
<div id="e3" class="t " style="left:383px;top:270px;">Prod1</div>
<div id="l4" class="t " style="left:238px;top:297px;letter-spacing:0.287px;">Instance <u>r</u>oot directory:</div>
<div id="e4" class="t " style="left:383px;top:297px;letter-spacing:0.000px;">C:\Program Files\Microsoft SQL Server\</div>
<div id="l5" class="t " style="left:238px;top:341px;letter-spacing:0.150px;">SQL Server directory:</div>
<div id="v5" class="t " style="left:383px;top:341px;letter-spacing:0.180px;">C:\Program Files\Microsoft SQL Server\MSSQL10.Prod1</div>
<div id="l6" class="t " style="left:238px;top:371px;letter-spacing:0.088px;">Detected SQL Server instances and <u>f</u>eatures on this computer:</div>
<div id="c0" class="t " style="left:244px;top:411px;">Instance</div>
<div id="c1a" class="t " style="left:336px;top:398px;letter-spacing:-0.117px;">Cluster</div>
<div id="c1b" class="t " style="left:336px;top:411px;letter-spacing:-0.150px;">Network</div>
<div id="c1c" class="t " style="left:336px;top:424px;letter-spacing:-0.667px;">Name</div>
<div id="c2" class="t " style="left:428px;top:411px;letter-spacing:0.186px;">Features</div>
<div id="c3" class="t " style="left:520px;top:411px;letter-spacing:-0.300px;">Edition</div>
<div id="c4" class="t " style="left:612px;top:411px;letter-spacing:-0.333px;">Version</div>
<div id="c5" class="t " style="left:704px;top:411px;letter-spacing:0.070px;">Instance ID</div>
<div id="b0" class="t " style="left:512px;top:580px;letter-spacing:0.000px;">&lt; <u>B</u>ack</div>
<div id="b1" class="t " style="left:591px;top:580px;"><u>N</u>ext &gt;</div>
<div id="b2" class="t " style="left:671px;top:580px;">Cancel</div>
<div id="b3" class="t " style="left:754px;top:580px;letter-spacing:0.667px;">Help</div>
</div>
</body></html>
